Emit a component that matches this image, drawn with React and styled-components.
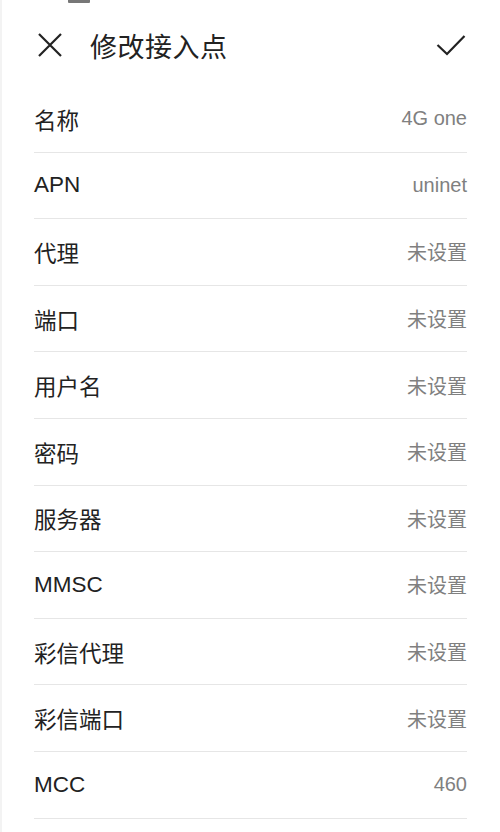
import React from 'react'
import styled, { createGlobalStyle } from 'styled-components'

const GlobalStyle = createGlobalStyle`
  body {
    margin: 0;
    background: #fff;
    font-family: "Liberation Sans", "Noto Sans CJK SC", sans-serif;
  }
`

const Page = styled.div`
  width: 500px;
  height: 832px;
  overflow: hidden;
  background: #fff;
  box-shadow: inset 3px 0 0 -1px #f3f3f3;
`

const StatusStrip = styled.div`
  height: 4px;
  display: flex;
  padding-left: 68px;
  span {
    width: 22px;
    height: 3px;
    background: #777;
    border-radius: 0 0 1px 1px;
  }
`

const Header = styled.div`
  height: 82px;
  display: flex;
  align-items: center;
  padding: 0 34px 0 37px;
`

const Title = styled.h1`
  flex: 1;
  margin: 0 0 0 27px;
  font-size: 27px;
  font-weight: 400;
  color: #222;
  letter-spacing: 0.5px;
`

const IconButton = styled.button`
  display: flex;
  align-items: center;
  justify-content: center;
  padding: 0;
  border: none;
  background: none;
  cursor: pointer;
`

const List = styled.div`
  margin: 0 33px 0 34px;
`

const Row = styled.div`
  height: 65.6px;
  display: flex;
  align-items: center;
  justify-content: space-between;
  border-bottom: 1px solid #e6e6e6;
`

const Label = styled.span`
  font-size: 22.5px;
  color: #222;
`

const Value = styled.span`
  font-size: 20px;
  color: #808080;
`

const rows = [
  ['名称', '4G one'],
  ['APN', 'uninet'],
  ['代理', '未设置'],
  ['端口', '未设置'],
  ['用户名', '未设置'],
  ['密码', '未设置'],
  ['服务器', '未设置'],
  ['MMSC', '未设置'],
  ['彩信代理', '未设置'],
  ['彩信端口', '未设置'],
  ['MCC', '460'],
]

export default function App() {
  return (
    <Page>
      <GlobalStyle />
      <StatusStrip><span /></StatusStrip>
      <Header>
        <IconButton aria-label="关闭">
          <svg width="26" height="26" viewBox="0 0 26 26">
            <path d="M2 2 L24 24 M24 2 L2 24" stroke="#222" strokeWidth="2.2" fill="none" />
          </svg>
        </IconButton>
        <Title>修改接入点</Title>
        <IconButton aria-label="保存">
          <svg width="30" height="22" viewBox="0 0 30 22">
            <path d="M1.5 11 L11 20 L28.5 2" stroke="#222" strokeWidth="2.2" fill="none" />
          </svg>
        </IconButton>
      </Header>
      <List>
        {rows.map(([label, value]) => (
          <Row key={label}>
            <Label>{label}</Label>
            <Value>{value}</Value>
          </Row>
        ))}
      </List>
    </Page>
  )
}
